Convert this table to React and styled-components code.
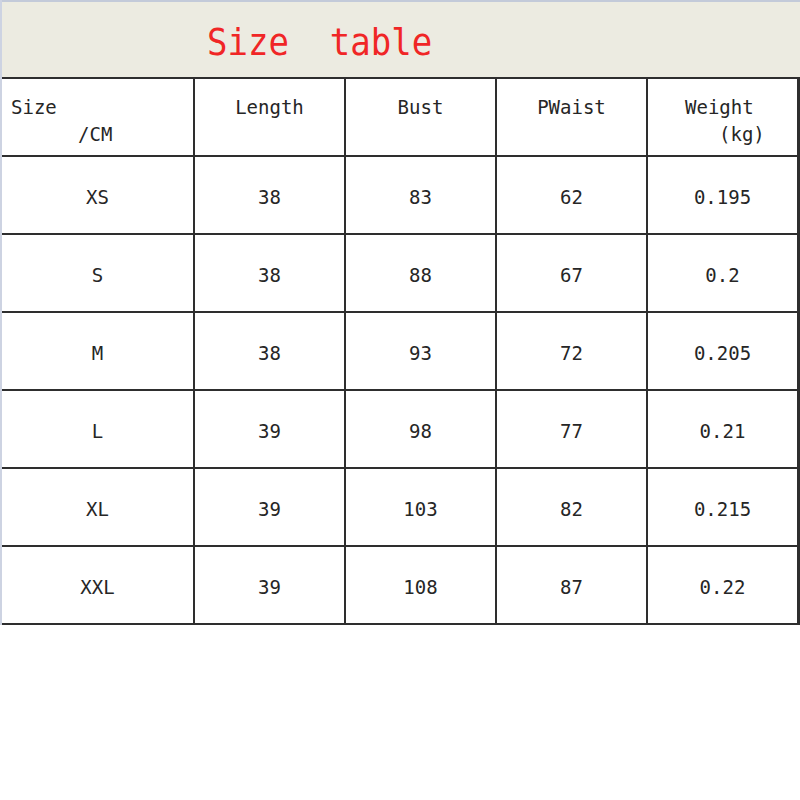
import React from "react";
import styled, { createGlobalStyle } from "styled-components";

const GlobalStyle = createGlobalStyle`
  html, body {
    margin: 0;
    padding: 0;
    background: #ffffff;
  }
  body {
    font-family: "DejaVu Sans Mono", "Liberation Mono", "Noto Sans CJK SC", monospace;
  }
`;

const Sheet = styled.div`
  width: 800px;
  border-left: 2px solid #cdd3e2;
  box-sizing: border-box;
`;

const TitleBand = styled.div`
  height: 77px;
  box-sizing: border-box;
  border-top: 2px solid #c3cad9;
  background: #ecebe1;
  display: flex;
  align-items: center;
  padding-left: 205px;
  padding-top: 4px;
`;

const Title = styled.h1`
  margin: 0;
  font-family: "DejaVu Sans Mono", "Liberation Mono", monospace;
  font-weight: normal;
  font-size: 34px;
  color: #f02626;
  white-space: pre;
  transform: scaleY(1.1);
`;

const Grid = styled.div`
  display: grid;
  grid-template-columns: 191px 149px 149px 149px 149px;
  grid-auto-rows: 76px;
  gap: 2px;
  background: #2e2e2e;
  border-top: 2px solid #2e2e2e;
  border-right: 2px solid #2e2e2e;
  border-bottom: 2px solid #2e2e2e;
  width: 798px;
  box-sizing: border-box;
`;

const Cell = styled.div`
  background: #ffffff;
  color: #262626;
  font-size: 19px;
  display: flex;
  align-items: ${(p) => (p.$head ? "flex-start" : "center")};
  justify-content: ${(p) => (p.$pad != null ? "flex-start" : "center")};
  padding-top: ${(p) => (p.$head ? "15px" : "4px")};
  padding-left: ${(p) => (p.$pad != null ? p.$pad : 0)}px;
  white-space: pre;
  line-height: 27px;
  box-sizing: border-box;
`;

const Stack = styled.div`
  display: flex;
  flex-direction: column;
`;

const Sub = styled.span`
  padding-left: ${(p) => p.$indent}px;
`;

const rows = [
  ["XS", "38", "83", "62", "0.195"],
  ["S", "38", "88", "67", "0.2"],
  ["M", "38", "93", "72", "0.205"],
  ["L", "39", "98", "77", "0.21"],
  ["XL", "39", "103", "82", "0.215"],
  ["XXL", "39", "108", "87", "0.22"],
];

export default function App() {
  return (
    <>
      <GlobalStyle />
      <Sheet>
        <TitleBand>
          <Title>Size  table</Title>
        </TitleBand>
        <Grid>
          <Cell $head $pad={9}>
            <Stack>
              <span>Size</span>
              <Sub $indent={67}>/CM</Sub>
            </Stack>
          </Cell>
          <Cell $head>Length</Cell>
          <Cell $head>Bust</Cell>
          <Cell $head>PWaist</Cell>
          <Cell $head $pad={37}>
            <Stack>
              <span>Weight</span>
              <Sub $indent={34}>(kg)</Sub>
            </Stack>
          </Cell>
          {rows.map((r, i) =>
            r.map((v, j) => <Cell key={i + "-" + j}>{v}</Cell>)
          )}
        </Grid>
      </Sheet>
    </>
  );
}
